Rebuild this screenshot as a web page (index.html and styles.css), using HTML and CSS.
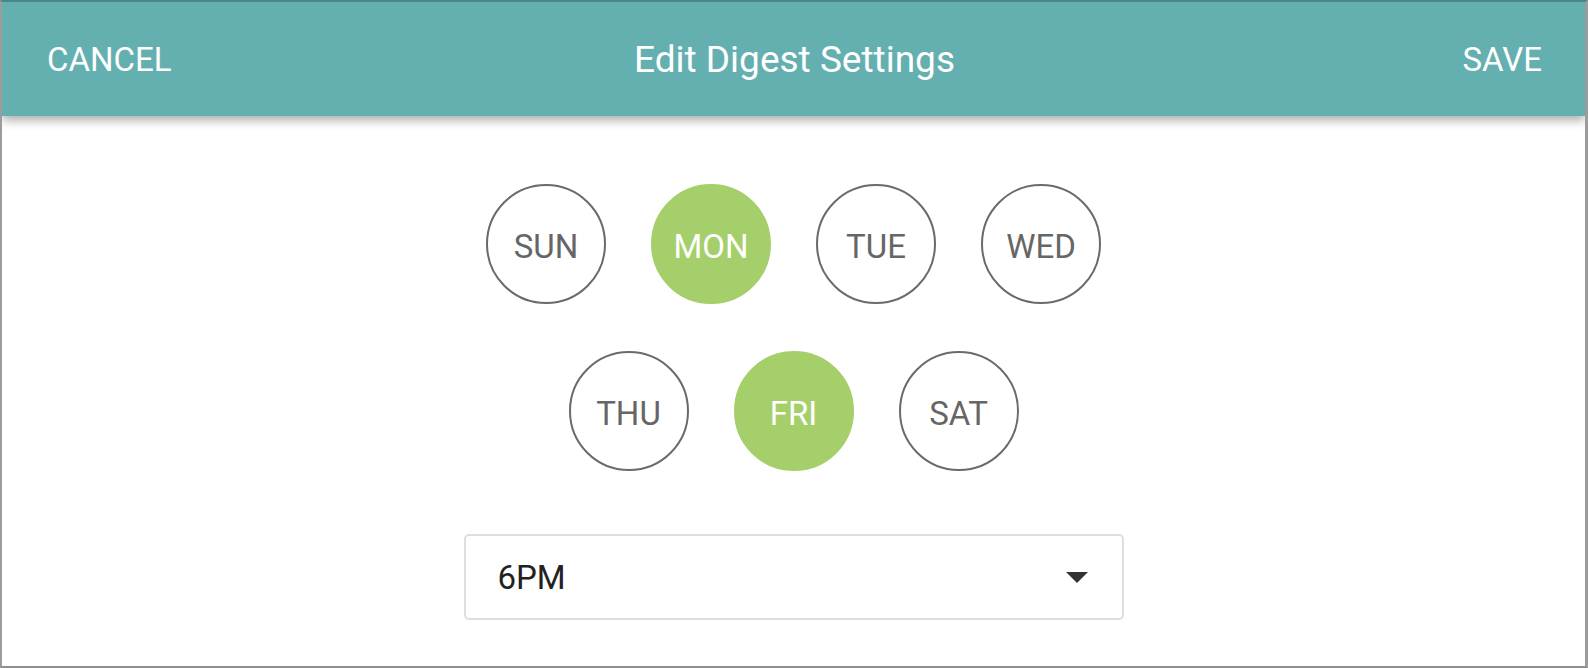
FILE: index.html
```html
<!DOCTYPE html>
<html>
<head>
<meta charset="utf-8">
<link rel="stylesheet" href="styles.css">
</head>
<body>
<div class="frame">
  <header class="topbar">
    <span class="action action-left">CANCEL</span>
    <span class="title">Edit Digest Settings</span>
    <span class="action action-right">SAVE</span>
  </header>
  <main class="content">
    <div class="days">
      <div class="day">SUN</div>
      <div class="day selected">MON</div>
      <div class="day">TUE</div>
      <div class="day">WED</div>
      <div class="day">THU</div>
      <div class="day selected">FRI</div>
      <div class="day">SAT</div>
    </div>
    <div class="select">
      <span class="select-value">6PM</span>
      <span class="caret"></span>
    </div>
  </main>
</div>
</body>
</html>
```

FILE: styles.css
```css
* { box-sizing: border-box; }
html, body { margin: 0; padding: 0; background: #ffffff; }
body { font-family: Roboto, "Liberation Sans", Arial, sans-serif; }

.frame {
  width: 1588px;
  height: 668px;
  border-top: 2px solid #4b8788;
  border-left: 2px solid #9c9c9c;
  border-right: 3px solid #9c9c9c;
  border-bottom: 2px solid #8f8f8f;
  display: flex;
  flex-direction: column;
  overflow: hidden;
}

.topbar {
  position: relative;
  z-index: 1;
  height: 114px;
  flex: 0 0 auto;
  background: #64afb0;
  color: #ffffff;
  display: grid;
  grid-template-columns: 1fr auto 1fr;
  align-items: center;
  padding: 0 43px 0 45px;
  box-shadow: 0 4px 10px rgba(0, 0, 0, 0.35);
}

.action { font-size: 33px; }
.action-left { justify-self: start; }
.action-right { justify-self: end; }
.title { font-size: 37px; }

.content {
  flex: 1;
  display: flex;
  flex-direction: column;
  align-items: center;
  padding-top: 68px;
}

.days {
  width: 615px;
  display: flex;
  flex-wrap: wrap;
  justify-content: center;
  column-gap: 45px;
  row-gap: 47px;
}

.day {
  width: 120px;
  height: 120px;
  border-radius: 50%;
  border: 2px solid #6a6a6a;
  color: #666666;
  font-size: 33px;
  padding-top: 4px;
  display: flex;
  align-items: center;
  justify-content: center;
}

.day.selected {
  background: #a5cf6a;
  border-color: #a5cf6a;
  color: #ffffff;
}

.select {
  margin-top: 63px;
  width: 660px;
  height: 86px;
  border: 2px solid #dedede;
  border-radius: 5px;
  display: flex;
  align-items: center;
  justify-content: space-between;
  padding: 0 34px 0 32px;
}

.select-value {
  font-size: 33px;
  color: #222222;
}

.caret {
  width: 0;
  height: 0;
  border-left: 11px solid transparent;
  border-right: 11px solid transparent;
  border-top: 11px solid #333333;
}
```
